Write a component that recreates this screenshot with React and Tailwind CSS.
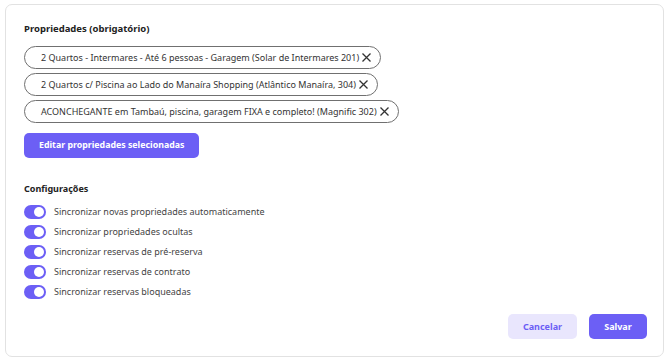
import React, { useState } from "react";

const properties = [
  "2 Quartos - Intermares - Até 6 pessoas - Garagem (Solar de Intermares 201)",
  "2 Quartos c/ Piscina ao Lado do Manaíra Shopping (Atlântico Manaíra, 304)",
  "ACONCHEGANTE em Tambaú, piscina, garagem FIXA e completo! (Magnific 302)",
];

const settings = [
  "Sincronizar novas propriedades automaticamente",
  "Sincronizar propriedades ocultas",
  "Sincronizar reservas de pré-reserva",
  "Sincronizar reservas de contrato",
  "Sincronizar reservas bloqueadas",
];

// Small on/off switch
const Toggle = ({ on, onClick }) => (
  <button
    onClick={onClick}
    className={`w-[22px] h-[14px] rounded-full flex items-center px-[2px] ${
      on ? "bg-[#6c5ff5] justify-end" : "bg-gray-300 justify-start"
    }`}
  >
    <span className="w-[10px] h-[10px] rounded-full bg-white" />
  </button>
);

const App = () => {
  const [items, setItems] = useState(properties);
  const [flags, setFlags] = useState(settings.map(() => true));

  return (
    <div className="w-[670px] h-[362px] bg-white p-[4px_6px_5px_5px] font-['Noto_Sans',sans-serif]">
      <div className="h-full border border-[#e2e2e2] rounded-[7px] flex flex-col pl-[18px] pr-[16px] pt-[17px] pb-[17px]">
        {/* Properties */}
        <h2 className="text-[9.5px] font-bold text-[#222] leading-[14px]">Propriedades (obrigatório)</h2>
        <div className="mt-[10px] flex flex-col items-start gap-[4px]">
          {items.map((p, i) => (
            <div
              key={i}
              className="h-[23px] flex items-center border border-[#707070] rounded-full pl-[16px] pr-[8px] text-[9px] text-[#333]"
            >
              <span>{p}</span>
              <button
                onClick={() => setItems(items.filter((_, j) => j !== i))}
                className="ml-[2px] text-[#333]"
              >
                <svg width="11" height="11" viewBox="0 0 11 11" fill="none" stroke="currentColor" strokeWidth="1.3">
                  <path d="M1.5 1.5L9.5 9.5M9.5 1.5L1.5 9.5" />
                </svg>
              </button>
            </div>
          ))}
        </div>

        <button className="mt-[10px] self-start h-[25px] px-[15px] rounded-[5px] bg-[#6c5ff5] text-white text-[8.8px] font-bold">
          Editar propriedades selecionadas
        </button>

        {/* Settings */}
        <h2 className="mt-[24px] text-[9px] font-bold text-[#222] leading-[14px]">Configurações</h2>
        <div className="mt-[9px] flex flex-col gap-[6px]">
          {settings.map((s, i) => (
            <div key={i} className="flex items-center gap-[8px] h-[14px]">
              <Toggle
                on={flags[i]}
                onClick={() => setFlags(flags.map((f, j) => (j === i ? !f : f)))}
              />
              <span className="text-[9px] text-[#444]">{s}</span>
            </div>
          ))}
        </div>

        {/* Footer */}
        <div className="mt-auto flex justify-end gap-[12px]">
          <button className="h-[25px] w-[69px] rounded-[5px] bg-[#e9e6fd] text-[#6c5ff5] text-[9px] font-bold">
            Cancelar
          </button>
          <button className="h-[25px] w-[58px] rounded-[5px] bg-[#6c5ff5] text-white text-[9px] font-bold">
            Salvar
          </button>
        </div>
      </div>
    </div>
  );
};

export default App;
